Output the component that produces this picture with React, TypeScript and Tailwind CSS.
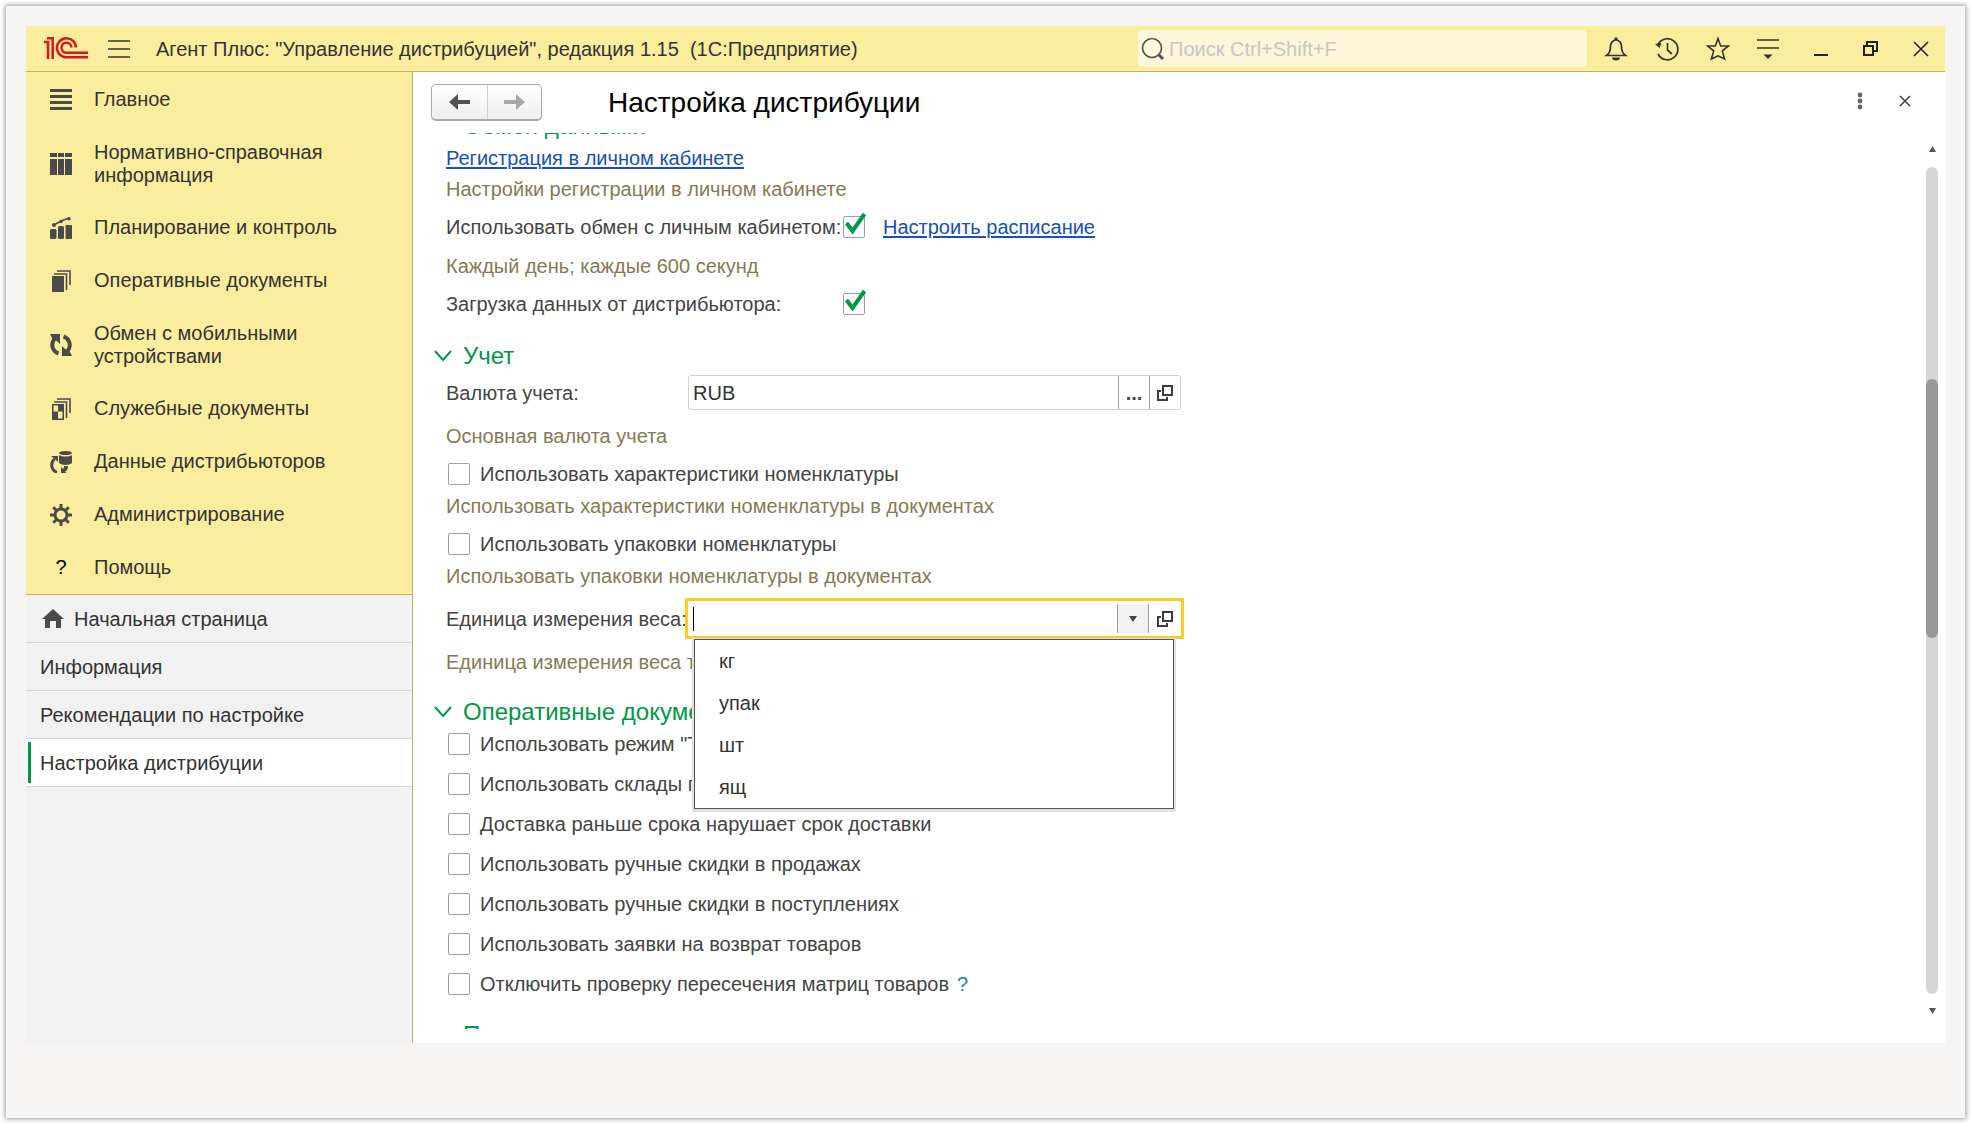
import { useState } from "react"
import type { ReactNode } from "react"

const menuItems = [
  { icon: "list", lines: ["Главное"] },
  { icon: "columns", lines: ["Нормативно-справочная", "информация"] },
  { icon: "chart", lines: ["Планирование и контроль"] },
  { icon: "stack", lines: ["Оперативные документы"] },
  { icon: "sync", lines: ["Обмен с мобильными", "устройствами"] },
  { icon: "service", lines: ["Служебные документы"] },
  { icon: "data", lines: ["Данные дистрибьюторов"] },
  { icon: "gear", lines: ["Администрирование"] },
  { icon: "help", lines: ["Помощь"] },
]

const openPages = [
  "Начальная страница",
  "Информация",
  "Рекомендации по настройке",
  "Настройка дистрибуции",
]

const operationalOptions = [
  'Использовать режим "Такси"',
  "Использовать склады партнеров",
  "Доставка раньше срока нарушает срок доставки",
  "Использовать ручные скидки в продажах",
  "Использовать ручные скидки в поступлениях",
  "Использовать заявки на возврат товаров",
  "Отключить проверку пересечения матриц товаров",
]

const weightUnits = ["кг", "упак", "шт", "ящ"]

const gearTeeth = [0, 45, 90, 135, 180, 225, 270, 315]

const MenuIcon = ({ name }: { name: string }) => {
  if (name === "help") {
    return <span className="w-[22px] text-center text-black">?</span>
  }

  return (
    <svg width="22" height="22" viewBox="0 0 22 22" fill="#4a4a4a">
      {name === "list" && (
        <path d="M0 0h22v3H0zM0 6h22v3H0zM0 12h22v3H0zM0 18h22v3H0z" />
      )}
      {name === "columns" && (
        <path d="M0 0h7v4H0zM8 0h6v4H8zM15 0h7v4h-7zM0 6h7v16H0zM8 6h6v16H8zM15 6h7v16h-7z" />
      )}
      {name === "chart" && (
        <>
          <rect x="0" y="12" width="6.5" height="10" rx="1.5" />
          <rect x="8" y="9" width="6" height="13" rx="1.5" />
          <rect x="15.5" y="8" width="6.5" height="14" rx="1" />
          <path d="M4 8l7-4 8-3" fill="none" stroke="#4a4a4a" strokeWidth="1.5" />
          <circle cx="4" cy="8" r="2" />
          <circle cx="11" cy="4.5" r="1.7" />
          <circle cx="19" cy="1.7" r="1.7" />
        </>
      )}
      {name === "stack" && (
        <>
          <rect x="2" y="6" width="12" height="16" />
          <path
            d="M4 4h12.5v16M7 1h13v14"
            fill="none"
            stroke="#4a4a4a"
            strokeWidth="1.6"
          />
        </>
      )}
      {name === "service" && (
        <>
          <path
            d="M2 6h12v16H2zM3.500 7.500v6h4.500v-6zM8 13.500v7h4.500v-7z"
            fillRule="evenodd"
          />
          <path
            d="M4 4h12.5v16M7 1h13v14"
            fill="none"
            stroke="#4a4a4a"
            strokeWidth="1.6"
          />
        </>
      )}
      {name === "sync" && (
        <>
          <path
            d="M8.5 19.5A9 9 0 0 1 4.500 5M13.500 2.500A9 9 0 0 1 17.500 17"
            fill="none"
            stroke="#4a4a4a"
            strokeWidth="4"
          />
          <path d="M0 0h10v10L7 7 3 6zM22 22H12V12l3 3 4 1z" />
        </>
      )}
      {name === "data" && (
        <>
          <ellipse cx="15.5" cy="2" rx="6.5" ry="2" />
          <path d="M9 4c3 2 10 2 13 0v8c-3 2.500-10 2.500-13 0z" />
          <path d="M7 21.500C1 19 0 12 4.500 8" fill="none" stroke="#4a4a4a" strokeWidth="3" />
          <path d="M1 5h7v6L6 9zM18 15c0 4-2 5-3 6l2 1h-6v-6l2 2c1-1 1-2 1-3z" />
        </>
      )}
      {name === "gear" && (
        <>
          <circle cx="11" cy="11" r="6" fill="none" stroke="#4a4a4a" strokeWidth="3" />
          {gearTeeth.map((angle) => (
            <path key={angle} d="M9.5 0h3v5h-3z" transform={`rotate(${angle} 11 11)`} />
          ))}
        </>
      )}
    </svg>
  )
}

const Logo = () => (
  <svg width="44" height="23" viewBox="0 0 44 23" fill="none" stroke="#d9161c" strokeWidth="2.5">
    <path d="M0 5h4v17M3 1.300h5.700V22" />
    <path d="M32 10.500A9.500 9.500 0 1 0 22.500 20.300H44" />
    <path d="M27.500 10.500A5 5 0 1 0 22.500 15.700H44" />
  </svg>
)

const OpenIcon = () => (
  <svg width="16" height="16" viewBox="0 0 16 16" fill="none" stroke="#3c3c3c" strokeWidth="2">
    <path d="M6 1h9v9H6zM4 6H1v9h9v-3" />
  </svg>
)

const TitleBar = () => (
  <header className="flex h-[46px] shrink-0 items-center border-b border-[#c3b55c] bg-[#fbed9e] pr-4 pl-[18px]">
    <Logo />
    <button aria-label="Меню" className="ml-5">
      <svg width="22" height="18" viewBox="0 0 22 18" stroke="#333" strokeWidth="1.5">
        <path d="M0 1h22M0 9h22M0 17h22" />
      </svg>
    </button>
    <span className="ml-[26px] whitespace-pre text-[#333]">
      {'Агент Плюс: "Управление дистрибуцией", редакция 1.15  (1С:Предприятие)'}
    </span>
    <label className="ml-auto flex h-[37px] w-[449px] items-center rounded-sm bg-[#fdf6d8] pl-[3px]">
      <svg width="24" height="24" viewBox="0 0 24 24" fill="none" stroke="#555">
        <circle cx="11" cy="11" r="9.5" strokeWidth="1.7" />
        <path d="M17.500 17.500L22 22" strokeWidth="3" />
      </svg>
      <input
        aria-label="Поиск"
        placeholder="Поиск Ctrl+Shift+F"
        className="ml-1 min-w-0 flex-1 bg-transparent outline-none placeholder:text-[#c6c6c6]"
      />
    </label>
    <div className="ml-[17px] flex items-center gap-[27px]">
      <button aria-label="Уведомления">
        <svg width="24" height="24" viewBox="0 0 24 24" fill="none" stroke="#333" strokeWidth="1.7">
          <path d="M2.500 18.500c3-2 4-5 4-9 0-4 2-6 5.500-7 3.500 1 5.500 3 5.500 7 0 4 1 7 4 9z" />
          <path d="M12 0.500v3" strokeWidth="3" />
          <path d="M8 20.500h8a4 3 0 0 1-8 0z" fill="#333" stroke="none" />
        </svg>
      </button>
      <button aria-label="История">
        <svg width="24" height="24" viewBox="0 0 24 24" fill="none" stroke="#333" strokeWidth="1.7">
          <path d="M3 7.500A10.500 10.500 0 1 1 3 17M12.500 6v7l4.500 4" />
          <path d="M0 7l6.500-1-2 5z" fill="#333" stroke="none" />
        </svg>
      </button>
      <button aria-label="Избранное">
        <svg width="24" height="24" viewBox="0 0 24 24" fill="none" stroke="#333" strokeWidth="1.6">
          <path d="M12 1.500l2.700 7.500h7.800l-6.200 4.900 2.300 8.100-6.600-3.200L5.400 22l2.300-8.100L1.500 9h7.800z" />
        </svg>
      </button>
      <button aria-label="Настройки">
        <svg width="22" height="22" viewBox="0 0 22 22" stroke="#333" strokeWidth="1.7">
          <path d="M0 2h22M0 10h22" />
          <path d="M6.500 16.500h9L11 21z" fill="#333" stroke="none" />
        </svg>
      </button>
      <button aria-label="Свернуть" className="ml-2">
        <svg width="14" height="16" viewBox="0 0 14 16" fill="#222">
          <path d="M0 13h14v2H0z" />
        </svg>
      </button>
      <button aria-label="Восстановить" className="ml-2">
        <svg width="15" height="15" viewBox="0 0 15 15" fill="none" stroke="#222" strokeWidth="2">
          <path d="M1 5h9v9H1zM4 5V1h10v9h-4" />
        </svg>
      </button>
      <button aria-label="Закрыть" className="ml-2">
        <svg width="16" height="16" viewBox="0 0 16 16" stroke="#222" strokeWidth="1.6">
          <path d="M1 1l14 14M15 1L1 15" />
        </svg>
      </button>
    </div>
  </header>
)

const Sidebar = () => (
  <aside className="flex w-[387px] shrink-0 flex-col border-r border-[#c3b55c] bg-[#f1f1f1] text-[#333]">
    <nav className="border-b border-[#c3b55c] bg-[#fbed9e] pt-px">
      {menuItems.map((item) => (
        <button
          key={item.icon}
          className={`flex w-full items-center gap-[22px] pl-6 text-left leading-[23px] ${item.lines.length > 1 ? "h-[75px]" : "h-[53px]"}`}
        >
          <MenuIcon name={item.icon} />
          <span>
            {item.lines.map((line) => (
              <span key={line} className="block">
                {line}
              </span>
            ))}
          </span>
        </button>
      ))}
    </nav>
    {openPages.map((page, i) => {
      const active = i === openPages.length - 1
      return (
        <button
          key={page}
          className={`flex h-12 items-center border-b border-[#d6d6d6] text-left ${active ? "bg-white" : ""}`}
        >
          <span className={`ml-0.5 h-[41px] w-[3px] ${active ? "bg-[#009846]" : ""}`} />
          {i === 0 && (
            <svg width="22" height="20" viewBox="0 0 22 20" fill="#4a4a4a" className="ml-[11px]">
              <path d="M11 0l11 10h-3v9h-5v-7H8v7H3v-9H0z" />
            </svg>
          )}
          <span className={i === 0 ? "ml-[10px]" : "ml-[9px]"}>{page}</span>
        </button>
      )
    })}
  </aside>
)

const Check = ({
  id,
  label,
  defaultChecked,
}: {
  id: string
  label?: string
  defaultChecked?: boolean
}) => {
  const [checked, setChecked] = useState(!!defaultChecked)

  return (
    <label className={`flex items-center gap-[10px] ${label ? "ml-0.5" : ""}`}>
      <span className="relative flex">
        <input
          id={id}
          type="checkbox"
          checked={checked}
          onChange={() => setChecked(!checked)}
          className="size-[22px] appearance-none rounded-[2px] border border-[#a0a0a0] bg-white"
        />
        {checked && (
          <svg
            width="24"
            height="24"
            viewBox="0 0 24 24"
            fill="none"
            stroke="#009846"
            strokeWidth="4"
            className="pointer-events-none absolute -top-1 left-0"
          >
            <path d="M3.500 11l6 8L21.500 2" />
          </svg>
        )}
      </span>
      {label}
    </label>
  )
}

const SectionTitle = ({ children }: { children: ReactNode }) => (
  <h2 className="-ml-3 flex h-8 items-center gap-[11px] text-2xl text-[#009846]">
    <svg width="18" height="12" viewBox="0 0 18 12" fill="none" stroke="#009846" strokeWidth="2">
      <path d="M1 1l8 9 8-9" />
    </svg>
    {children}
  </h2>
)

const Hint = ({ children }: { children: ReactNode }) => (
  <p className="text-[#857b52]">{children}</p>
)

const SettingsForm = () => (
  <form className="min-w-0 flex-1 overflow-hidden pl-[33px] text-[#444]">
    <div className="-mt-[23px]">
      <SectionTitle>Обмен данными</SectionTitle>
    </div>
    <div className="mt-1">
      <a href="#account" className="text-[#1650b8] underline underline-offset-2">
        Регистрация в личном кабинете
      </a>
    </div>
    <div className="mt-[7px]">
      <Hint>Настройки регистрации в личном кабинете</Hint>
    </div>
    <div className="mt-3 flex h-7 items-center">
      <label htmlFor="exchange" className="w-[397px]">
        Использовать обмен с личным кабинетом:
      </label>
      <Check id="exchange" defaultChecked />
      <a href="#schedule" className="ml-[18px] text-[#1650b8] underline underline-offset-2">
        Настроить расписание
      </a>
    </div>
    <div className="mt-[13px]">
      <Hint>Каждый день; каждые 600 секунд</Hint>
    </div>
    <div className="mt-3 flex h-7 items-center">
      <label htmlFor="loading" className="w-[397px]">
        Загрузка данных от дистрибьютора:
      </label>
      <Check id="loading" defaultChecked />
    </div>

    <div className="mt-[22px]">
      <SectionTitle>Учет</SectionTitle>
    </div>
    <div className="mt-[3px] flex items-center">
      <label htmlFor="currency" className="w-[242px]">
        Валюта учета:
      </label>
      <div className="flex h-[35px] w-[493px] rounded-[3px] border border-[#d0d0d0]">
        <input
          id="currency"
          defaultValue="RUB"
          className="min-w-0 flex-1 pl-1 text-[#333] outline-none"
        />
        <button type="button" className="w-[31px] border-l border-[#a0a0a0] font-bold">
          ...
        </button>
        <button
          type="button"
          aria-label="Открыть валюту"
          className="flex w-[31px] items-center justify-center border-l border-[#a0a0a0]"
        >
          <OpenIcon />
        </button>
      </div>
    </div>
    <div className="mt-[14px]">
      <Hint>Основная валюта учета</Hint>
    </div>
    <div className="mt-[14px]">
      <Check id="characteristics" label="Использовать характеристики номенклатуры" />
    </div>
    <div className="mt-2">
      <Hint>Использовать характеристики номенклатуры в документах</Hint>
    </div>
    <div className="mt-[14px]">
      <Check id="packages" label="Использовать упаковки номенклатуры" />
    </div>
    <div className="mt-2">
      <Hint>Использовать упаковки номенклатуры в документах</Hint>
    </div>

    <div className="mt-[10px] flex items-center">
      <label htmlFor="weight" className="w-[239px] whitespace-nowrap">
        Единица измерения веса:
      </label>
      <div className="relative flex h-[41px] w-[499px] border-3 border-[#fbcb26] py-[3px]">
        <span className="ml-[5px] h-6 w-px self-center bg-black" />
        <input
          id="weight"
          className="min-w-0 flex-1 text-[#333] caret-transparent outline-none"
        />
        <button
          type="button"
          aria-label="Выбрать"
          className="flex w-8 items-center justify-center border-x border-[#a0a0a0] bg-[#f1f1f1]"
        >
          <svg width="8" height="6" viewBox="0 0 8 6" fill="#444">
            <path d="M0 0h8L4 6z" />
          </svg>
        </button>
        <button
          type="button"
          aria-label="Открыть единицу измерения"
          className="flex w-8 items-center justify-center"
        >
          <OpenIcon />
        </button>
        <ul className="absolute top-[38px] left-[6px] z-10 w-[480px] border border-[#555] bg-white text-[#333] shadow-[0_1px_0_2px_#e2e2e2]">
          {weightUnits.map((unit) => (
            <li key={unit} className="flex h-[42px] items-center pl-6">
              {unit}
            </li>
          ))}
        </ul>
      </div>
    </div>
    <div className="mt-[11px]">
      <Hint>Единица измерения веса товаров</Hint>
    </div>

    <div className="mt-[22px]">
      <SectionTitle>Оперативные документы</SectionTitle>
    </div>
    <div className="mt-1 flex flex-col gap-4">
      {operationalOptions.map((option, i) => (
        <div key={option} className="flex h-6 items-center gap-2">
          <Check id={`option-${i}`} label={option} />
          {i === operationalOptions.length - 1 && (
            <button type="button" className="text-[#1a7bc4]">
              ?
            </button>
          )}
        </div>
      ))}
    </div>
    <h2 className="mt-[27px] ml-[17px] text-2xl leading-6 text-[#009846]">Печать</h2>
  </form>
)

const ScrollBar = () => (
  <div className="mr-[7px] flex w-3 flex-col items-center">
    <svg width="7" height="6" viewBox="0 0 7 6" fill="#555" className="mt-[13px]">
      <path d="M0 6h7L3.500 0z" />
    </svg>
    <div className="mt-[15px] w-full flex-1 rounded-full bg-[#d6d6d6] pt-[212px]">
      <div className="h-[259px] rounded-full bg-[#999]" />
    </div>
    <svg width="7" height="6" viewBox="0 0 7 6" fill="#555" className="mt-[14px] mb-[15px]">
      <path d="M0 0h7L3.500 6z" />
    </svg>
  </div>
)

const Workspace = () => (
  <main className="flex min-w-0 flex-1 flex-col bg-white">
    <div className="flex h-[61px] shrink-0 items-center pr-[34px] pl-[18px]">
      <div className="flex h-[37px] w-[111px] rounded-[5px] border border-b-2 border-[#a8a8a8] bg-linear-to-b from-white to-[#eeeeee]">
        <button
          aria-label="Назад"
          className="flex w-14 items-center justify-center border-r border-[#d0d0d0]"
        >
          <svg width="22" height="16" viewBox="0 0 22 16" fill="#505050">
            <path d="M0 8l9-8v6h12v4H9v6z" />
          </svg>
        </button>
        <button aria-label="Вперед" className="flex flex-1 items-center justify-center">
          <svg width="22" height="16" viewBox="0 0 22 16" fill="#a8a8a8">
            <path d="M21 8l-9-8v6H0v4h12v6z" />
          </svg>
        </button>
      </div>
      <h1 className="ml-[66px] text-[28px] text-black">Настройка дистрибуции</h1>
      <div className="ml-auto flex items-center gap-9 pb-[3px]">
        <button aria-label="Еще">
          <svg width="6" height="18" viewBox="0 0 6 18" fill="#666">
            <circle cx="3" cy="3" r="2.4" />
            <circle cx="3" cy="9" r="2.4" />
            <circle cx="3" cy="15" r="2.4" />
          </svg>
        </button>
        <button aria-label="Закрыть страницу">
          <svg width="12" height="12" viewBox="0 0 12 12" stroke="#444" strokeWidth="1.6">
            <path d="M1 1l10 10M11 1L1 11" />
          </svg>
        </button>
      </div>
    </div>
    <div className="mb-[14px] flex min-h-0 flex-1">
      <SettingsForm />
      <ScrollBar />
    </div>
  </main>
)

const App = () => (
  <div className="flex h-screen flex-col bg-white p-[6px] font-['Liberation_Sans',Arial,sans-serif] text-xl leading-6">
    <div className="flex min-h-0 flex-1 flex-col bg-[#f6f5f3] px-5 pt-5 pb-[75px] shadow-[0_0_5px_1px_#999]">
      <TitleBar />
      <div className="flex min-h-0 flex-1">
        <Sidebar />
        <Workspace />
      </div>
    </div>
  </div>
)

export default App
